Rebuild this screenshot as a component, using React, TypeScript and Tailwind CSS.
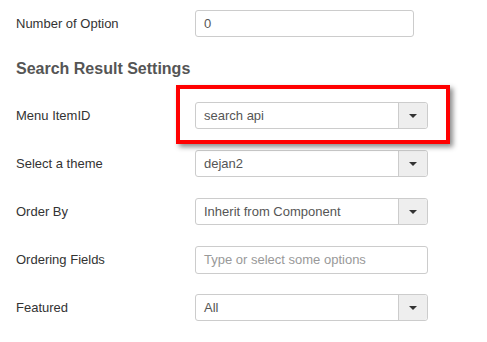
const font = { fontFamily: '"Liberation Sans", Arial, sans-serif' };

function Caret() {
  return (
    <svg width="8" height="4" viewBox="0 0 8 4">
      <path d="M0 0h8L4 4z" fill="#333" />
    </svg>
  );
}

function SelectBox({ value }: { value: string }) {
  return (
    <div className="flex h-[27px] w-[233px] rounded-[3px] border border-[#ccc] bg-white">
      <div className="flex flex-1 items-center pl-[8px] text-[13px] text-[#555]">{value}</div>
      <div className="flex w-[29px] items-center justify-center rounded-r-[3px] border-l border-[#ccc] bg-[#eee]">
        <Caret />
      </div>
    </div>
  );
}

function Row({ label, children, className = '' }: { label: string; children: React.ReactNode; className?: string }) {
  return (
    <div className={`flex h-[27px] items-center ${className}`}>
      <div className="w-[179px] text-[13px] text-[#333]">{label}</div>
      {children}
    </div>
  );
}

export default function App() {
  return (
    <div className="h-[342px] w-[487px] bg-white pl-[16px]" style={font}>
      <Row label="Number of Option" className="mt-[10px]">
        <div className="flex h-[27px] w-[219px] items-center rounded-[3px] border border-[#ccc] pl-[8px] text-[13px] text-[#555]">
          0
        </div>
      </Row>

      <h3 className="mt-[22px] mb-[23px] h-[20px] text-[16px] leading-[20px] font-bold text-[#555]">
        Search Result Settings
      </h3>

      <div className="relative">
        <Row label="Menu ItemID">
          <SelectBox value="search api" />
        </Row>
        <div className="absolute left-[160px] top-[-17px] h-[59px] w-[274px] border-[4px] border-[#f00] shadow-[3px_3px_5px_rgba(0,0,0,0.45)]" />
      </div>

      <Row label="Select a theme" className="mt-[21px]">
        <SelectBox value="dejan2" />
      </Row>

      <Row label="Order By" className="mt-[21px]">
        <SelectBox value="Inherit from Component" />
      </Row>

      <Row label="Ordering Fields" className="mt-[21px]">
        <div className="flex h-[28px] w-[233px] items-center rounded-[3px] border border-[#ccc] pl-[8px] text-[13px] text-[#999]">
          Type or select some options
        </div>
      </Row>

      <Row label="Featured" className="mt-[21px]">
        <SelectBox value="All" />
      </Row>
    </div>
  );
}
